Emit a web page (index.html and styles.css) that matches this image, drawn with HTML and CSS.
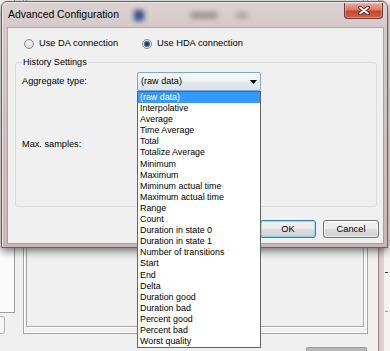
FILE: index.html
```html
<!DOCTYPE html>
<html>
<head>
<meta charset="utf-8">
<link rel="stylesheet" href="styles.css">
</head>
<body>
<div class="screen">
  <div class="bg">
    <div class="bg-left">
      <div class="bg-list"></div>
      <div class="bg-tab"></div>
    </div>
    <div class="bg-center">
      <div class="bg-panel"><div class="bg-inner"></div></div>
      <div class="bg-bar"></div>
    </div>
    <div class="bg-frame"></div>
    <div class="bg-edge">
      <span class="tick t1"></span>
      <span class="tick t2"></span>
    </div>
  </div>

  <div class="dialog">
    <div class="titlebar">
      <span class="title">Advanced Configuration</span>
      <span class="blur b1"></span>
      <span class="blur b2"></span>
      <span class="blur b3"></span>
      <div class="close">
        <svg width="12" height="9" viewBox="0 0 12 9">
          <path d="M2 1.5 L10 7.5 M10 1.5 L2 7.5" stroke="#4a2020" stroke-width="3.6" stroke-linecap="round"/>
          <path d="M2 1.5 L10 7.5 M10 1.5 L2 7.5" stroke="#ffffff" stroke-width="2" stroke-linecap="round"/>
        </svg>
      </div>
    </div>
    <div class="client">
      <div class="radios">
        <label class="radio"><span class="dot"></span>Use DA connection</label>
        <label class="radio on"><span class="dot"></span>Use HDA connection</label>
      </div>
      <fieldset class="group">
        <legend>History Settings</legend>
        <div class="row">
          <span class="lbl">Aggregate type:</span>
          <div class="combo">
            <span class="combo-text">(raw data)</span>
            <svg class="arrow" width="7" height="4" viewBox="0 0 7 4"><polygon points="0,0 7,0 3.5,4" fill="#000"/></svg>
            <ul class="list">
              <li class="sel">(raw data)</li>
              <li>Interpolative</li>
              <li>Average</li>
              <li>Time Average</li>
              <li>Total</li>
              <li>Totalize Average</li>
              <li>Minimum</li>
              <li>Maximum</li>
              <li>Miminum actual time</li>
              <li>Maximum actual time</li>
              <li>Range</li>
              <li>Count</li>
              <li>Duration in state 0</li>
              <li>Duration in state 1</li>
              <li>Number of transitions</li>
              <li>Start</li>
              <li>End</li>
              <li>Delta</li>
              <li>Duration good</li>
              <li>Duration bad</li>
              <li>Percent good</li>
              <li>Percent bad</li>
              <li>Worst quality</li>
            </ul>
          </div>
        </div>
        <div class="row-max"><span class="lbl">Max. samples:</span></div>
      </fieldset>
      <div class="buttons">
        <button class="btn default">OK</button>
        <button class="btn">Cancel</button>
      </div>
    </div>
  </div>
</div>
</body>
</html>
```

FILE: styles.css
```css
* { box-sizing: border-box; }
html, body { margin: 0; padding: 0; }
body {
  background: #f0f0f0;
  font-family: "Liberation Sans", Arial, sans-serif;
  font-size: 9.3px;
  color: #000;
}
.screen {
  position: relative;
  width: 390px;
  height: 351px;
  overflow: hidden;
  background: #f0f0f0;
}

/* background application window */
.bg { display: flex; height: 351px; }
.bg-left { width: 15px; flex: none; display: flex; flex-direction: column; }
.bg-list {
  height: 313px;
  background: #fbfbfb;
  border-right: 1px solid #9c9c9c;
  border-bottom: 1px solid #9c9c9c;
}
.bg-tab {
  width: 5px;
  height: 18px;
  margin-top: 3px;
  border: 1px solid #b4b4b4;
  border-left: 0;
  border-radius: 0 3px 3px 0;
  background: #f6f6f6;
}
.bg-center { margin-left: 8px; width: 345px; flex: none; display: flex; flex-direction: column; }
.bg-panel {
  height: 334px;
  border: 1px solid #a3a3a3;
  border-top: 0;
  padding: 0 3px 6px 2px;
  box-shadow: inset 1px 0 #ffffff, inset -1px -1px #ffffff;
}
.bg-inner {
  height: 100%;
  border: 1px solid #a8a8a8;
  border-top: 0;
  box-shadow: 1px 1px #ffffff;
}
.bg-bar {
  margin-top: 13px;
  margin-left: 283px;
  width: 61px;
  height: 4px;
  background: #b8b8b8;
  border: 1px solid #9a9a9a;
  border-bottom: 0;
  border-radius: 2px 2px 0 0;
}
.bg-frame {
  margin-left: 10px;
  width: 6px;
  flex: none;
  background: linear-gradient(to right, #9e8585 0, #9e8585 1px, #d9c3c3 1px, #e6d4d4 100%);
}
.bg-edge { flex: 1; display: flex; flex-direction: column; background: #f7f2f2; }
.tick { display: block; height: 1px; width: 3px; margin-left: 1px; }
.t1 { margin-top: 272px; background: #333; }
.t2 { margin-top: 38px; background: #999; }

/* dialog */
.dialog {
  position: absolute;
  left: 1px;
  top: 1px;
  width: 387px;
  height: 247px;
  border: 1px solid #6f5e5e;
  border-radius: 6px 6px 0 0;
  padding: 0 4px 4px 6px;
  background: linear-gradient(to bottom, #dcd2d2 0, #d4c8c8 30px, #c9b6b6 100%);
  box-shadow: 0 3px 9px rgba(0, 0, 0, 0.55), inset 1px 1px 0 rgba(255,255,255,0.5);
  display: flex;
  flex-direction: column;
}
.titlebar {
  height: 26px;
  flex: none;
  display: flex;
  align-items: center;
}
.title {
  font-size: 10.4px;
  color: #000;
  white-space: nowrap;
  margin-top: -1px;
}
.blur { display: block; flex: none; filter: blur(2.5px); }
.b1 { margin-left: 15px; width: 10px; height: 11px; background: #33508a; border-radius: 2px; }
.b2 { margin-left: 46px; width: 28px; height: 7px; background: #a29494; border-radius: 3px; }
.b3 { margin-left: 18px; width: 12px; height: 7px; background: #b0a2a2; border-radius: 3px; }
.close {
  margin-left: auto;
  align-self: flex-start;
  margin-top: 1px;
  width: 39px;
  height: 16px;
  border: 1px solid #6b3a36;
  border-top: 0;
  border-radius: 0 0 4px 4px;
  background: linear-gradient(to bottom, #e9a99b 0%, #dc7a66 45%, #c8432c 55%, #d45f48 100%);
  display: flex;
  align-items: center;
  justify-content: center;
  box-shadow: inset 0 0 0 1px rgba(255,200,190,0.45);
}
.close svg { display: block; }

.client {
  flex: 1;
  background: #f0f0f0;
  padding: 10px 4px 0 7px;
  display: flex;
  flex-direction: column;
  box-shadow: 0 0 0 1px rgba(120, 100, 100, 0.35);
}
.radios { display: flex; margin-left: 9px; height: 11px; align-items: center; }
.radio { display: flex; align-items: center; white-space: nowrap; line-height: 11px; }
.radio + .radio { margin-left: 24px; }
.dot {
  width: 10px;
  height: 10px;
  border-radius: 50%;
  border: 1px solid #8a8a8a;
  background: radial-gradient(circle at 50% 40%, #f4f4f4 0, #dcdcdc 70%, #cfcfcf 100%);
  margin-right: 5px;
  flex: none;
}
.radio.on .dot {
  background: radial-gradient(circle at 50% 50%, #1d2f4e 0, #2c4f86 2px, #6d95c8 3px, #e9eef4 3.6px, #dcdcdc 100%);
}

.group {
  margin: 8px 0 0 0;
  padding: 4px 6px 0 6px;
  border: 1px solid #d5dbdf;
  border-radius: 3px;
  width: 362px;
  height: 150px;
  min-width: 0;
}
.group legend {
  padding: 0 1px;
  line-height: 11px;
  font-size: 9.1px;
}
.row { display: flex; align-items: center; height: 19px; }
.lbl { width: 115px; flex: none; line-height: 11px; white-space: nowrap; font-size: 9.2px; }
.combo {
  position: relative;
  width: 124px;
  height: 19px;
  border: 1px solid #7fa6cc;
  border-radius: 2px;
  background: linear-gradient(to bottom, #f6f8fa 0%, #eef2f5 50%, #e1e8ee 51%, #dde4ea 100%);
  display: flex;
  align-items: center;
  padding-left: 3px;
}
.combo-text { font-size: 9.1px; line-height: 11px; }
.arrow { margin-left: auto; margin-right: 3px; display: block; }
.list {
  position: absolute;
  left: -1px;
  top: 18px;
  width: 124px;
  margin: 0;
  padding: 0;
  list-style: none;
  background: #fff;
  border: 1px solid #646464;
  z-index: 5;
}
.list li {
  height: 11.1px;
  line-height: 11.1px;
  padding-left: 2px;
  font-size: 8.9px;
  white-space: nowrap;
}
.list li.sel { background: #3399ff; color: #fff; }

.row-max { margin-top: 48px; }

.buttons { display: flex; justify-content: flex-end; gap: 7px; margin-top: 13px; }
.btn {
  width: 56px;
  height: 18px;
  padding: 0;
  margin: 0;
  font-family: "Liberation Sans", Arial, sans-serif;
  font-size: 9.3px;
  color: #000;
  border: 1px solid #707070;
  border-radius: 3px;
  background: linear-gradient(to bottom, #f2f2f2 0%, #ebebeb 50%, #dddddd 51%, #cfcfcf 100%);
  box-shadow: inset 0 0 0 1px rgba(255,255,255,0.7);
}
.btn.default {
  border-color: #3c7fb1;
  box-shadow: inset 0 0 0 1px rgba(120, 210, 250, 0.7);
}
```
